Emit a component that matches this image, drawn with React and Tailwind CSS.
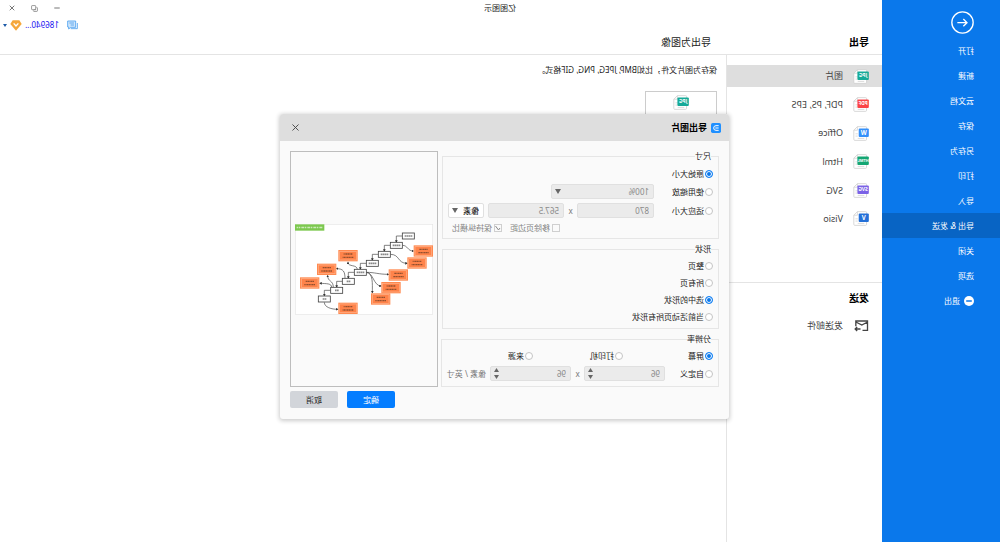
import { Minus, X, Copy } from 'lucide-react';

const MENU = ['打开', '新建', '云文档', '保存', '另存为', '打印', '导入', '导出 & 发送', '关闭', '选项'];

const FORMATS = [
  { name: '图片', tag: 'JPG', color: '#16aa98' },
  { name: 'PDF, PS, EPS', tag: 'PDF', color: '#fb4446' },
  { name: 'Office', tag: 'W', color: '#3490fa' },
  { name: 'Html', tag: 'HTML', color: '#14a673' },
  { name: 'SVG', tag: 'SVG', color: '#7b62e6' },
  { name: 'Visio', tag: 'V', color: '#2470d8' },
];

const STEPS = [
  [95, 48],
  [131, 76],
  [167, 103],
  [203, 130],
  [239, 157],
  [275, 184],
  [310, 211],
  [347, 237],
];

const NOTES = [
  [50, 93],
  [69, 129],
  [125, 165],
  [147, 203],
  [178, 237],
  [276, 265],
  [391, 189],
  [340, 148],
  [276, 107],
];

const CURVES = [
  'M113 76C96 76 98 93 80 93',
  'M149 103C120 103 128 130 99 130',
  'M221 157C195 157 185 163 155 163',
  'M221 157C200 157 200 197 177 198',
  'M221 157C200 160 203 190 203 218',
  'M248 149C248 132 276 142 276 127',
  'M285 175C285 155 290 146 310 146',
  'M320 202C320 180 337 186 337 167',
  'M325 202C325 190 340 191 360 190',
  'M347 247C347 262 325 268 307 268',
];

function FileIcon({ tag, color }) {
  const wide = tag.length > 1;
  const size = tag.length === 4 ? 12 : wide ? 15 : 19;
  return (
    <svg viewBox="0 0 48 46" className="h-[15px] w-4 shrink-0" aria-hidden="true">
      <path d="M7 4Q7 2 10 2H35L46 13V41Q46 44 43 44H10Q7 44 7 41Z" fill="#fff" stroke="#cfcfcf" strokeWidth="2.5" />
      <path d="M35 2V13H46M34 24H41M34 31H41M14 38H34" fill="none" stroke="#d4d4d4" strokeWidth="2.5" />
      <rect x="0" y="8" width={wide ? 35 : 31} height="26" rx="3" fill={color} />
      <text
        x={wide ? 17.5 : 15.5}
        y={wide ? 26 : 28}
        fill="#fff"
        fontSize={size}
        fontWeight="700"
        textAnchor="middle"
      >
        {tag}
      </text>
    </svg>
  );
}

function Logo() {
  return (
    <svg viewBox="0 0 30 30" className="size-[10px]" aria-hidden="true">
      <rect width="30" height="30" rx="5" fill="#2090ff" />
      <path d="M7 8H15A7 7 0 0 1 15 22H7M7 15H17" fill="none" stroke="#fff" strokeWidth="3" />
    </svg>
  );
}

function Diagram() {
  return (
    <svg viewBox="21 12 414 273" className="h-[91px] w-[138px]" role="img" aria-label="预览">
      <defs>
        <marker id="arrow" viewBox="0 0 6 6" refX="4" refY="3" markerWidth="4" markerHeight="4" orient="auto">
          <path d="M0 0L6 3L0 6Z" fill="#333" />
        </marker>
      </defs>
      <rect x="22" y="13" width="412" height="270" fill="#fff" stroke="#e6e6e6" strokeWidth="2" />
      <rect x="347" y="13" width="88" height="19" fill="#7cc84e" />
      <path d="M353 22.500H430" stroke="#cdeabb" strokeWidth="5" strokeDasharray="9 3 4 2" />
      <g fill="none" stroke="#444" strokeWidth="2">
        {STEPS.slice(0, -1).map(([x, y], i) => (
          <path key={x} d={`M${x + 18} ${y}H${STEPS[i + 1][0]}V${STEPS[i + 1][1] - 10}`} markerEnd="url(#arrow)" />
        ))}
        {CURVES.map((d) => (
          <path key={d} d={d} markerEnd="url(#arrow)" />
        ))}
      </g>
      {STEPS.map(([x, y], i) => (
        <g key={x}>
          <rect x={x - 18} y={y - 9} width="36" height="18" fill="#fff" stroke="#444" strokeWidth="2.500" />
          <path
            d={i > 4 ? `M${x - 6} ${y}H${x + 6}` : `M${x - 12} ${y}H${x + 12}`}
            stroke="#888"
            strokeWidth="5"
            strokeDasharray="5 1"
          />
        </g>
      ))}
      {NOTES.map(([x, y]) => (
        <g key={`${x}-${y}`}>
          <rect x={x - 29} y={y - 17} width="58" height="34" fill="#ff8a50" />
          <rect x={x - 25} y={y - 13} width="50" height="26" fill="#ff834a" stroke="#ffb48e" strokeWidth="2" />
          <path d={`M${x - 13} ${y - 5}H${x + 13}M${x - 16} ${y + 5}H${x + 16}`} stroke="#94502f" strokeWidth="4" strokeDasharray="4 1" />
        </g>
      ))}
    </svg>
  );
}

function Radio({ label, name, checked, className }) {
  return (
    <label className={`flex h-3 items-center gap-px ${className || ''}`}>
      <input
        type="radio"
        name={name}
        defaultChecked={checked}
        className="size-2 shrink-0 appearance-none rounded-full border border-[#c4c4c4] bg-white checked:border-[#1482f5] checked:bg-[#0a78eb] checked:shadow-[inset_0_0_0_1px_#fff]"
      />
      {label}
    </label>
  );
}

function Check({ label, checked }) {
  return (
    <label className="flex items-center gap-0.5 text-[#858585]">
      <span className="relative flex size-2">
        <input
          type="checkbox"
          defaultChecked={checked}
          disabled
          className="size-2 appearance-none border border-[#cfcfcf] bg-[#fafafa]"
        />
        {checked && (
          <svg viewBox="0 0 8 8" className="absolute inset-0 size-2" fill="none" stroke="#8a8a8a" aria-hidden="true">
            <path d="M2 4L3.500 6L6.500 2" />
          </svg>
        )}
      </span>
      {label}
    </label>
  );
}

function Box({ value, label, className }) {
  return (
    <input
      type="text"
      aria-label={label}
      defaultValue={value}
      disabled
      className={`h-[15px] min-w-0 rounded-xs border border-[#e0e0e0] bg-[#ebebeb] pl-1 text-[#8a8a8a] ${className}`}
    />
  );
}

function Spinner({ value, label }) {
  return (
    <div className="relative flex w-[81px]">
      <Box value={value} label={label} className="w-full" />
      <div className="absolute inset-y-0 right-1 flex flex-col justify-center gap-[3px]">
        <button type="button" aria-label="增加" className="block">
          <svg viewBox="0 0 10 8" className="block h-1 w-[5px]"><path d="M0 8L5 0L10 8Z" fill="#666" /></svg>
        </button>
        <button type="button" aria-label="减少" className="block">
          <svg viewBox="0 0 10 8" className="block h-1 w-[5px]"><path d="M0 0L5 8L10 0Z" fill="#666" /></svg>
        </button>
      </div>
    </div>
  );
}

function Select({ value, label, disabled, className }) {
  return (
    <div className={`relative flex ${className}`}>
      <select
        aria-label={label}
        disabled={disabled}
        className="h-[15px] w-full appearance-none rounded-xs border border-[#e0e0e0] bg-white px-1 text-[#222] opacity-100 disabled:bg-[#ebebeb] disabled:text-[#8a8a8a]"
      >
        <option>{value}</option>
      </select>
      <svg viewBox="0 0 10 8" className="pointer-events-none absolute top-[5px] right-1 h-[5px] w-[6px]">
        <path d="M0 0L5 8L10 0Z" fill="#666" />
      </svg>
    </div>
  );
}

function Group({ title, className, children }) {
  return (
    <fieldset className={`border border-[#e6e6e6] px-[5px] ${className}`}>
      <legend className="ml-0.5 leading-3">{title}</legend>
      {children}
    </fieldset>
  );
}

function ExportDialog() {
  return (
    <section
      role="dialog"
      aria-label="导出图片"
      className="absolute top-[114px] left-[271px] w-[449px] overflow-hidden rounded-[3px] bg-[#fafafa] text-[8px] text-[#222] shadow-[0_1px_4px_1px_rgba(0,0,0,0.2)]"
    >
      <header className="flex h-[27px] items-center gap-1 bg-[#dedede] px-[8px]">
        <Logo />
        <h2 className="flex-1 text-[9px] font-bold text-black">导出图片</h2>
        <button type="button" aria-label="关闭" className="mr-0.5">
          <X className="size-[11px] text-[#444]" strokeWidth={2} />
        </button>
      </header>

      <div className="flex gap-1 px-[10px] pt-[9px]">
        <form className="flex w-[277px] flex-col gap-1">
          <Group title="尺寸" className="pt-[6px] pb-1">
            <div className="flex flex-col gap-1">
              <Radio name="size" label="原始大小" checked />
              <div className="flex items-center">
                <Radio name="size" label="使用缩放" className="w-[59px]" />
                <Select value="100%" label="缩放" disabled className="w-[103px]" />
              </div>
              <div className="flex items-center">
                <Radio name="size" label="适应大小" className="w-[59px]" />
                <Box value="870" label="宽度" className="w-[77px]" />
                <span className="w-[13px] text-center text-[#777]">x</span>
                <Box value="567.5" label="高度" className="w-[76px]" />
                <Select value="像素" label="单位" className="ml-1 w-[36px] font-medium" />
              </div>
              <div className="flex h-3 items-center justify-end gap-2 pr-1">
                <Check label="移除页边距" />
                <Check label="保持纵横比" checked />
              </div>
            </div>
          </Group>

          <Group title="形状" className="py-[5px]">
            <div className="flex flex-col gap-[5px]">
              <Radio name="shape" label="整页" />
              <Radio name="shape" label="所有页" />
              <Radio name="shape" label="选中的形状" checked />
              <Radio name="shape" label="当前活动页所有形状" />
            </div>
          </Group>

          <Group title="分辨率" className="py-[5px]">
            <div className="flex flex-col gap-1">
              <div className="flex">
                <Radio name="dpi" label="屏幕" checked className="w-[90px]" />
                <Radio name="dpi" label="打印机" className="w-[90px]" />
                <Radio name="dpi" label="来源" />
              </div>
              <div className="flex items-center">
                <Radio name="dpi" label="自定义" className="w-[48px]" />
                <Spinner value="96" label="水平分辨率" />
                <span className="w-[13px] text-center text-[#777]">x</span>
                <Spinner value="96" label="垂直分辨率" />
                <span className="ml-1 whitespace-nowrap text-[#777]">像素 / 英寸</span>
              </div>
            </div>
          </Group>
        </form>

        <div className="flex flex-1 pt-px">
          <div className="flex flex-1 items-center justify-center border border-[#bdbdbd]">
            <Diagram />
          </div>
        </div>
      </div>

      <footer className="flex justify-end gap-[9px] px-[10px] pt-1 pb-[11px]">
        <button type="button" className="h-[17px] w-12 rounded-xs bg-[#047dff] text-white">
          确定
        </button>
        <button type="button" className="h-[17px] w-12 rounded-xs bg-[#d2d5da] text-[#222]">
          取消
        </button>
      </footer>
    </section>
  );
}

function Sidebar() {
  return (
    <nav className="w-[118px] shrink-0 bg-[#0a78eb] text-[8px] text-white">
      <button type="button" aria-label="返回" className="mt-[11px] mb-1 ml-[26px] block size-[23px]">
        <svg viewBox="0 0 69 69" className="size-[23px]" fill="none" stroke="#fff" strokeWidth="4">
          <circle cx="34.5" cy="34.5" r="32" />
          <path d="M50 35H21M32 24L21 35L32 46" />
        </svg>
      </button>
      {MENU.map((item) => (
        <a
          key={item}
          href="#"
          className={`flex h-[25px] items-center pl-[26px] ${item === '导出 & 发送' ? 'bg-[#0864c4]' : ''}`}
        >
          {item}
        </a>
      ))}
      <a href="#" className="flex h-[25px] items-center gap-1 pl-[26px]">
        <span className="flex size-[10px] items-center justify-center rounded-full bg-white">
          <Minus className="size-2 text-[#0a78eb]" strokeWidth={4} />
        </span>
        退出
      </a>
    </nav>
  );
}

function TopBar() {
  return (
    <header className="border-b border-[#e4e4e4]">
      <div className="flex h-4 items-center">
        <h1 className="flex-1 text-center text-[8px] text-[#222]">亿图图示</h1>
        <div className="flex w-[118px] items-center justify-end gap-[15px] pr-2 text-[#777]">
          <button type="button" aria-label="最小化">
            <Minus className="size-2" strokeWidth={3} />
          </button>
          <button type="button" aria-label="还原">
            <Copy className="size-[7px] -scale-y-100" strokeWidth={2.5} />
          </button>
          <button type="button" aria-label="关闭窗口">
            <X className="size-2" strokeWidth={3} />
          </button>
        </div>
      </div>
      <div className="flex h-[18px] items-center justify-end pr-[3px]">
        <svg viewBox="0 0 33 30" className="mr-2 h-[10px] w-[11px]" aria-hidden="true">
          <path d="M7 3H31V21H28V27L22 22H7Z" fill="#cfe6fb" stroke="#4b9fee" strokeWidth="2.5" />
          <path d="M2 9V26H22M12 9H26M12 15H22" fill="none" stroke="#4b9fee" strokeWidth="2.5" />
        </svg>
        <a href="#" className="mr-[3px] text-[8px] text-[#1a12f0]">
          186940...
        </a>
        <svg viewBox="0 0 36 33" className="mr-[3px] h-[11px] w-3" aria-hidden="true">
          <path d="M8 1H28L35 12L18 32L1 12Z" fill="#f5a73b" />
          <path d="M11 10L18 18L25 10" fill="none" stroke="#fff" strokeWidth="4" />
        </svg>
        <svg viewBox="0 0 8 6" className="h-[3px] w-1" aria-hidden="true">
          <path d="M0 0L4 6L8 0Z" fill="#1c5aa8" />
        </svg>
      </div>
      <div className="mb-1 flex h-4 items-center pl-[13px] text-[10px]">
        <h2 className="w-[158px] font-bold text-black">导出</h2>
        <h2 className="text-[#222]">导出为图像</h2>
      </div>
    </header>
  );
}

export default function App() {
  return (
    <div className="relative flex min-h-screen -scale-x-100 overflow-hidden bg-white font-['Noto_Sans','Noto_Sans_CJK_SC',sans-serif]">
      <Sidebar />
      <div className="flex min-w-0 flex-1 flex-col">
        <TopBar />
        <div className="flex flex-1">
          <aside className="w-[156px] border-r border-[#e4e4e4] pt-[10px] text-[#444]">
            <div className="flex h-[165px] flex-col justify-between text-[9px]">
              {FORMATS.map((f, i) => (
                <a
                  key={f.tag}
                  href="#"
                  className={`flex h-[22px] items-center gap-[10px] pl-[13px] ${i === 0 ? 'bg-[#dedede]' : ''}`}
                >
                  <FileIcon tag={f.tag} color={f.color} />
                  {f.name}
                </a>
              ))}
            </div>
            <div className="mt-[52px] border-t border-[#e4e4e4] pt-[7px] pl-[13px]">
              <h2 className="text-[10px] leading-4 font-bold text-black">发送</h2>
              <a href="#" className="mt-3 flex items-center gap-[11px] text-[9px] leading-4">
                <svg viewBox="0 0 42 36" className="h-3 w-[15px]" fill="none" stroke="#444" strokeWidth="4" aria-hidden="true">
                  <path d="M18 31H3V3H38V19M3 6L20 15L38 6M24 27H40M34 21L40 27L34 33" />
                </svg>
                发送邮件
              </a>
            </div>
          </aside>
          <main className="flex-1 pt-[9px] pl-[9px]">
            <p className="text-[8px] leading-3 text-[#222]">保存为图片文件，比如BMP, JPEG, PNG, GIF格式。</p>
            <button
              type="button"
              className="mt-[15px] flex h-[72px] w-[72px] justify-center border border-[#ccc] pt-[3px]"
            >
              <FileIcon tag="JPG" color="#16aa98" />
            </button>
          </main>
        </div>
      </div>
      <ExportDialog />
    </div>
  );
}
